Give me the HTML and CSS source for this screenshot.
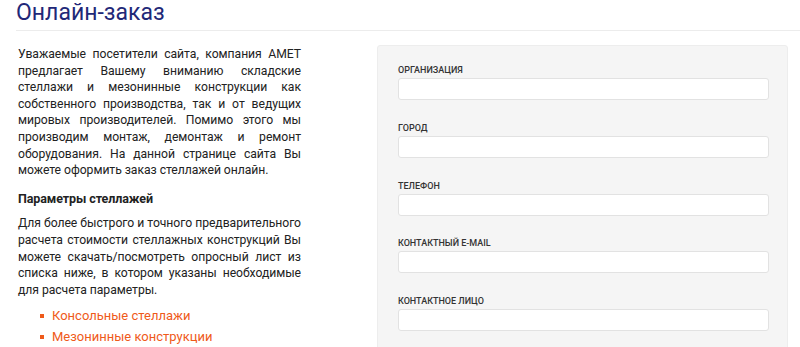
FILE: index.html
```html
<!DOCTYPE html>
<html lang="ru">
<head>
<meta charset="utf-8">
<title>Онлайн-заказ</title>
<link rel="stylesheet" href="styles.css">
</head>
<body>
<div class="page">
  <h1 class="title">Онлайн-заказ</h1>
  <div class="content">
    <div class="intro">
      <p class="text">Уважаемые посетители сайта, компания АМЕТ предлагает Вашему вниманию складские стеллажи и мезонинные конструкции как собственного производства, так и от ведущих мировых производителей. Помимо этого мы производим монтаж, демонтаж и ремонт оборудования. На данной странице сайта Вы можете оформить заказ стеллажей онлайн.</p>
      <h2 class="subtitle">Параметры стеллажей</h2>
      <p class="text">Для более быстрого и точного предварительного расчета стоимости стеллажных конструкций Вы можете скачать/посмотреть опросный лист из списка ниже, в котором указаны необходимые для расчета параметры.</p>
      <ul class="links">
        <li><a href="#">Консольные стеллажи</a></li>
        <li><a href="#">Мезонинные конструкции</a></li>
      </ul>
    </div>
    <form class="panel">
      <div class="field"><label class="label">Организация</label><input class="input" type="text"></div>
      <div class="field"><label class="label">Город</label><input class="input" type="text"></div>
      <div class="field"><label class="label">Телефон</label><input class="input" type="text"></div>
      <div class="field"><label class="label">Контактный e-mail</label><input class="input" type="text"></div>
      <div class="field"><label class="label">Контактное лицо</label><input class="input" type="text"></div>
    </form>
  </div>
</div>
</body>
</html>
```

FILE: styles.css
```css
html, body {
  margin: 0;
  padding: 0;
  background: #fff;
  overflow: hidden;
}
body {
  font-family: Roboto, "Liberation Sans", sans-serif;
  color: #222;
}
.page {
  padding-left: 16px;
}
.title {
  margin: 0;
  font-size: 23px;
  line-height: 26px;
  font-weight: 400;
  color: #1f2878;
  padding-bottom: 4px;
  border-bottom: 1px solid #ececec;
}
.content {
  display: flex;
  align-items: flex-start;
  padding-top: 14px;
}
.intro {
  width: 283px;
  margin-left: 2px;
  flex: none;
}
.text {
  margin: 1px 0 0 0;
  font-size: 12.2px;
  letter-spacing: -0.05px;
  line-height: 16.6px;
  text-align: justify;
}
.subtitle {
  margin: 12px 0 8px 0;
  font-size: 12.5px;
  letter-spacing: -0.1px;
  line-height: 16.6px;
  font-weight: 700;
}
.links {
  list-style: none;
  margin: 7px 0 0 0;
  padding: 0 0 0 22px;
}
.links li {
  font-size: 13px;
  line-height: 21px;
  display: flex;
  align-items: center;
}
.links li::before {
  content: "";
  width: 4px;
  height: 4px;
  background: #ef5a1a;
  margin-right: 8px;
  flex: none;
}
.links a {
  color: #ef5a1a;
  text-decoration: none;
}
.panel {
  margin-left: 76px;
  width: 411px;
  height: 400px;
  background: #f5f5f5;
  border: 1px solid #ededed;
  border-radius: 3px;
  padding: 18px 18px 0 20px;
  box-sizing: border-box;
  flex: none;
}
.field {
  display: flex;
  flex-direction: column;
  margin-bottom: 21.75px;
}
.label {
  font-size: 9px;
  line-height: 12px;
  font-weight: 500;
  text-transform: uppercase;
  color: #333;
  margin-bottom: 2px;
}
.input {
  height: 22px;
  box-sizing: border-box;
  margin: 0;
  background: #fff;
  border: 1px solid #e2e2e2;
  border-radius: 3px;
  font: inherit;
}
```
